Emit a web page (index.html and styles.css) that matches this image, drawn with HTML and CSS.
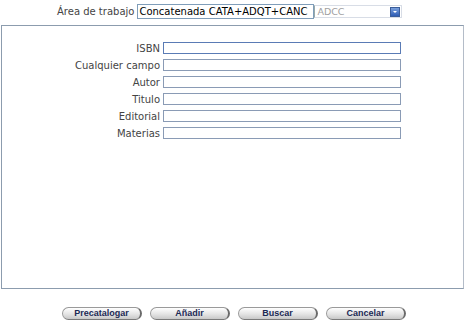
FILE: index.html
```html
<!DOCTYPE html>
<html lang="es">
<head>
    <meta charset="UTF-8">
    <link rel="stylesheet" href="styles.css">
    <title>Búsqueda</title>
</head>
<body>
    <div class="workarea">
        <label for="area">Área de trabajo</label>
        <input type="text" id="area" class="area-input" value="Concatenada CATA+ADQT+CANC">
        <div class="select">
            <span>ADCC</span>
            <span class="arrow"></span>
        </div>
    </div>

    <div class="panel">
        <div class="form">
            <label for="isbn">ISBN</label>
            <input type="text" id="isbn" class="field focus">
            <label for="cualquier">Cualquier campo</label>
            <input type="text" id="cualquier" class="field">
            <label for="autor">Autor</label>
            <input type="text" id="autor" class="field">
            <label for="titulo">Titulo</label>
            <input type="text" id="titulo" class="field">
            <label for="editorial">Editorial</label>
            <input type="text" id="editorial" class="field">
            <label for="materias">Materias</label>
            <input type="text" id="materias" class="field">
        </div>
    </div>

    <div class="buttons">
        <button>Precatalogar</button>
        <button>Añadir</button>
        <button>Buscar</button>
        <button>Cancelar</button>
    </div>
</body>
</html>
```

FILE: styles.css
```css
body {
    font-family: "DejaVu Sans", Verdana, sans-serif;
    font-size: 10px;
    color: #444;
    background-color: #fff;
    margin: 0;
    padding: 0;
    width: 468px;
    height: 323px;
    overflow: hidden;
}

.workarea {
    display: flex;
    align-items: center;
    height: 15px;
    margin-top: 4px;
    padding-left: 57px;
}

.workarea label {
    margin-right: 3px;
}

.area-input {
    box-sizing: border-box;
    width: 177px;
    height: 15px;
    margin: 0;
    padding: 0 1px;
    border: 1px solid #7f9db9;
    font-family: inherit;
    font-size: 10px;
    color: #000;
}

.select {
    box-sizing: border-box;
    display: flex;
    align-items: center;
    justify-content: space-between;
    width: 88px;
    height: 13px;
    border: 1px solid #d8dde6;
    border-left: 1px solid #9aa;
    color: #a0a0a0;
    padding: 0 1px 0 2px;
    font-size: 9.5px;
}

.arrow {
    box-sizing: border-box;
    width: 10px;
    height: 10px;
    background: linear-gradient(#7aa0dc, #2d5cb4);
    border: 1px solid #3a5d9a;
    position: relative;
}

.arrow::after {
    content: "";
    position: absolute;
    left: 2px;
    top: 3px;
    border-left: 2px solid transparent;
    border-right: 2px solid transparent;
    border-top: 2px solid #fff;
}

.panel {
    box-sizing: border-box;
    width: 463px;
    height: 264px;
    margin: 6px 0 0 1px;
    border: 1px solid #8c9cae;
    border-right-color: #b4bcc8;
    padding-top: 16px;
}

.form {
    display: grid;
    grid-template-columns: 158px 238px;
    column-gap: 3px;
    row-gap: 5px;
    align-items: center;
}

.form label {
    text-align: right;
}

.field {
    box-sizing: border-box;
    width: 238px;
    height: 12px;
    margin: 0;
    padding: 0;
    border: 1px solid #8a9bb5;
}

.field.focus {
    border-color: #5a7bb5;
}

.buttons {
    display: flex;
    gap: 8px;
    margin: 18px 0 0 62px;
}

.buttons button {
    width: 80px;
    height: 13px;
    padding: 0;
    border: 1px solid #9a9a9a;
    border-right: 2px solid #6a6a6a;
    border-bottom: 1px solid #7a7a7a;
    border-radius: 7px;
    background: linear-gradient(#ffffff, #e4e4e4 55%, #c8c8c8);
    font-family: "Liberation Sans", Arial, sans-serif;
    font-weight: bold;
    font-size: 9px;
    color: #1c2a55;
    line-height: 11px;
}
```
